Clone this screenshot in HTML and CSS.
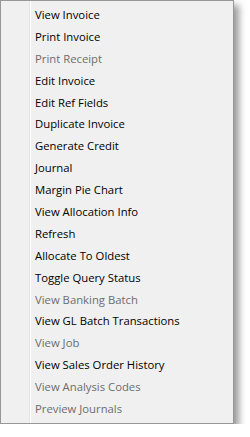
FILE: index.html
```html
<!DOCTYPE html>
<html>
<head>
	<meta charset="utf-8">
	<title>Menu</title>
	<link rel="stylesheet" href="styles.css">
</head>
<body>
	<div class="menu">
		<ul>
			<li>View Invoice</li>
			<li>Print Invoice</li>
			<li class="off">Print Receipt</li>
			<li>Edit Invoice</li>
			<li>Edit Ref Fields</li>
			<li>Duplicate Invoice</li>
			<li>Generate Credit</li>
			<li>Journal</li>
			<li>Margin Pie Chart</li>
			<li>View Allocation Info</li>
			<li>Refresh</li>
			<li>Allocate To Oldest</li>
			<li>Toggle Query Status</li>
			<li class="off">View Banking Batch</li>
			<li>View GL Batch Transactions</li>
			<li class="off">View Job</li>
			<li>View Sales Order History</li>
			<li class="off">View Analysis Codes</li>
			<li class="off">Preview Journals</li>
		</ul>
	</div>
</body>
</html>
```

FILE: styles.css
```css
body{
	margin: 0;
	background: #fff;
	font-family: "Open Sans", "Liberation Sans", sans-serif;
	font-size: 11.3px;
}
.menu{
	width: 232px;
	border: 1px solid #979797;
	background-color: #f0f0f0;
	background-image: linear-gradient(to right, transparent 28px, #e2e3e3 28px, #e2e3e3 29px, #fff 29px, #fff 30px, transparent 30px);
	box-shadow: 5px 5px 7px rgba(0,0,0,0.4);
	padding: 3px 0 3px 0;
}
.menu ul{
	list-style: none;
	margin: 0;
	padding: 0;
}
.menu li{
	height: 21.9px;
	line-height: 21.9px;
	padding-left: 34px;
	color: #000;
}
.menu li.off{
	color: #6d6d6d;
}
```
